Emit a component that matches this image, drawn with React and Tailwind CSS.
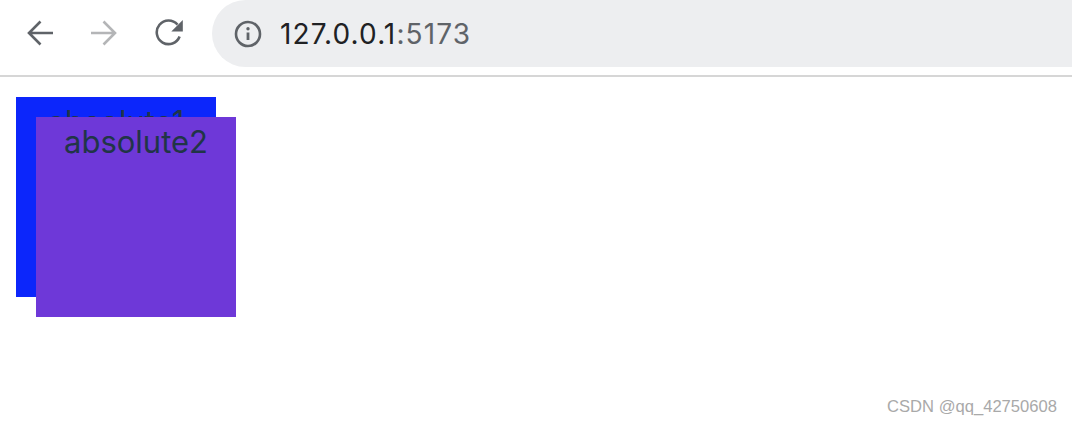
export default function App() {
  return (
    <div className="relative h-[428px] w-[1072px] overflow-hidden bg-white font-['Inter',sans-serif]">
      <div className="flex h-[77px] items-start border-b-2 border-[#d6d6d6]">
        <div className="flex h-[65px] w-[212px] items-center">
          <svg className="ml-[27px] h-[26px] w-[26px]" viewBox="0 0 26 26" fill="none" stroke="#5f6368" strokeWidth="2.6">
            <path d="M26 13H2M13.5 1.5L2 13l11.5 11.5" />
          </svg>
          <svg className="ml-[38px] h-[26px] w-[26px]" viewBox="0 0 26 26" fill="none" stroke="#b4b5b7" strokeWidth="2.6">
            <path d="M0 13h24M12.5 1.5L24 13 12.5 24.5" />
          </svg>
          <svg className="ml-[38px] mt-[1px] h-[28px] w-[28px]" viewBox="0 0 28 28" fill="none">
            <path d="M24.6 17.5A11.8 11.8 0 1 1 22.5 5.6" stroke="#5f6368" strokeWidth="2.6" />
            <path d="M27.8 1v11.5H16.3z" fill="#5f6368" />
          </svg>
        </div>
        <div className="flex h-[67px] flex-1 items-center rounded-l-[34px] bg-[#edeef0] pl-[22px]">
          <svg className="h-[28px] w-[28px]" viewBox="0 0 28 28" fill="none">
            <circle cx="14" cy="14" r="12" stroke="#5f6368" strokeWidth="2.6" />
            <path d="M14 12.5v7.5" stroke="#5f6368" strokeWidth="2.8" />
            <circle cx="14" cy="8.8" r="1.7" fill="#5f6368" />
          </svg>
          <span className="ml-[18px] text-[28px] leading-none tracking-[1.1px] text-[#202124]">
            127.0.0.1<span className="text-[#5f6368]">:5173</span>
          </span>
        </div>
      </div>

      {/* the overlap of the two boxes is the content here */}
      <div className="absolute left-[16px] top-[97px] h-[200px] w-[200px] bg-[#0c26fb] text-center text-[31px] leading-[50px] text-[#213547]">
        absolute1
      </div>
      <div className="absolute left-[36px] top-[117px] h-[200px] w-[200px] bg-[#6e38d8] text-center text-[31px] leading-[50px] text-[#213547]">
        absolute2
      </div>

      <div className="absolute bottom-[11px] right-[15px] font-['Liberation_Sans',sans-serif] text-[16.6px] leading-[20px] text-[#a9a9a9]">
        CSDN @qq_42750608
      </div>
    </div>
  )
}
